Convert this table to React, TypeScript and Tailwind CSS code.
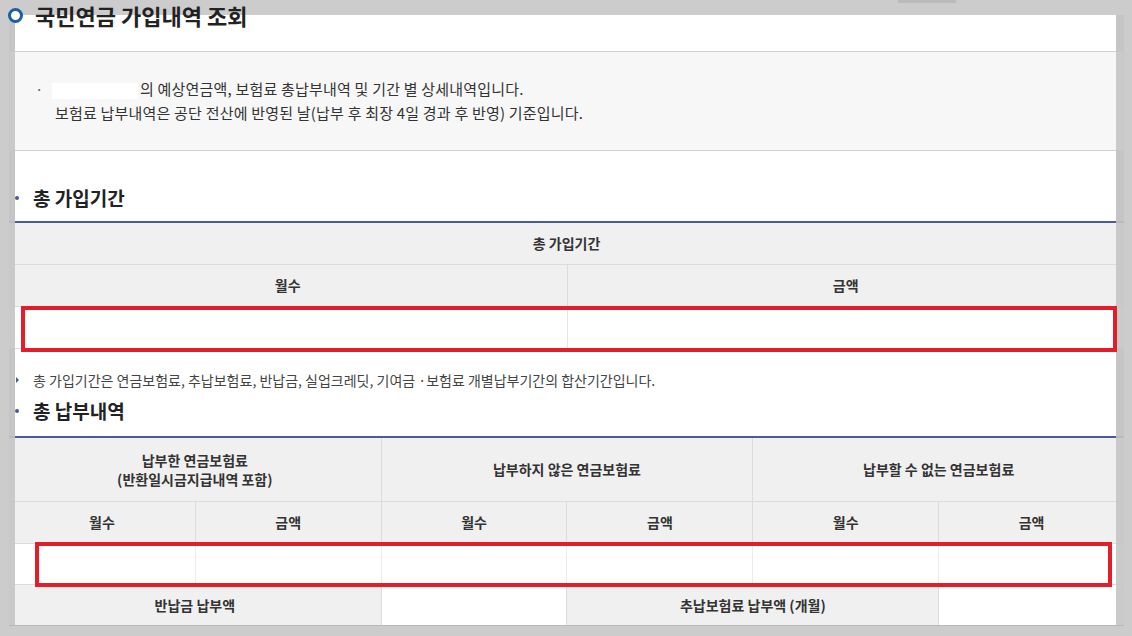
import React from "react";

const font = { fontFamily: '"Noto Sans CJK KR", "Noto Sans", sans-serif' };

function SectionTitle({ children }: { children: React.ReactNode }) {
    return (
        <div className="flex h-[28px] items-center pl-[6px]">
            <span className="h-[4px] w-[4px] rounded-full bg-[#4a5a9a]" />
            <h3 className="ml-[14px] text-[19px] font-bold leading-[28px] text-[#222]">{children}</h3>
        </div>
    );
}

function Th({ children, className = "" }: { children?: React.ReactNode; className?: string }) {
    return (
        <div className={`flex items-center justify-center bg-[#f0f0f0] text-center text-[14px] font-bold leading-[19px] text-[#333] ${className}`}>
            {children}
        </div>
    );
}

function Td({ className = "" }: { className?: string }) {
    return <div className={`bg-white ${className}`} />;
}

export default function App() {
    return (
        <div className="relative h-[636px] w-[1132px] overflow-hidden bg-[#cccccc]" style={font}>
            <div className="absolute left-[898px] top-0 h-[3px] w-[58px] bg-[#bbbbbb]" />

            <div className="ml-[15px] mt-[15px] flex h-[609px] w-[1101px] flex-col bg-white">
                <div className="-ml-[6px] flex w-[1115px] flex-col">
                    {/* page title */}
                    <div className="relative z-10 -mt-[15px] flex h-[30px] items-center">
                        <span className="-ml-[1px] h-[15px] w-[15px] rounded-full border-[3.5px] border-[#1d5fa6] bg-white" />
                        <h2 className="ml-[12px] text-[22px] font-bold leading-[30px] text-[#222]">국민연금 가입내역 조회</h2>
                    </div>

                    {/* info box */}
                    <div className="mt-[21px] h-[100px] border border-[#d0d0d0] bg-[#f7f7f7] pl-[25px] pt-[25px] text-[15px] leading-[24px] tracking-[0.2px] text-[#333]">
                        <div className="flex">
                            <span className="w-[20px] text-[#666]">·</span>
                            <p>
                                <span className="-ml-[3px] mr-[2px] inline-block h-[16px] w-[86px] bg-white align-middle" />
                                의 예상연금액, 보험료 총납부내역 및 기간 별 상세내역입니다.
                            </p>
                        </div>
                        <p className="pl-[20px]">보험료 납부내역은 공단 전산에 반영된 날(납부 후 최장 4일 경과 후 반영) 기준입니다.</p>
                    </div>

                    <div className="mt-[33px]">
                        <SectionTitle>총 가입기간</SectionTitle>
                    </div>

                    {/* total period table */}
                    <div className="relative mt-[9px] border-t-2 border-[#4a5a9a]">
                        <Th className="h-[42px] border-b border-[#dcdcdc]">총 가입기간</Th>
                        <div className="grid h-[42px] grid-cols-2 border-b border-[#dcdcdc]">
                            <Th>월수</Th>
                            <Th className="border-l border-[#dcdcdc]">금액</Th>
                        </div>
                        <div className="grid h-[42px] grid-cols-2 border-b border-[#dcdcdc]">
                            <Td />
                            <Td className="border-l border-[#e6e6e6]" />
                        </div>
                        <div className="absolute left-[12px] top-[83px] z-10 h-[46px] w-[1096px] border-[4px] border-[#e31e2a]" />
                    </div>

                    <div className="mt-[21px] flex h-[20px] items-center pl-[7px] text-[14px] leading-[20px] text-[#444]">
                        <span className="h-0 w-0 border-y-[3px] border-l-[3px] border-y-transparent border-l-[#4a5a9a]" />
                        <p className="ml-[14px]">총 가입기간은 연금보험료, 추납보험료, 반납금, 실업크레딧, 기여금 ·보험료 개별납부기간의 합산기간입니다.</p>
                    </div>

                    <div className="mt-[7px]">
                        <SectionTitle>총 납부내역</SectionTitle>
                    </div>

                    {/* total payment table */}
                    <div className="relative mt-[11px] border-t-2 border-[#4a5a9a]">
                        <div className="grid h-[64px] grid-cols-3 border-b border-[#dcdcdc]">
                            <Th>
                                납부한 연금보험료
                                <br />
                                (반환일시금지급내역 포함)
                            </Th>
                            <Th className="border-l border-[#dcdcdc]">납부하지 않은 연금보험료</Th>
                            <Th className="border-l border-[#dcdcdc]">납부할 수 없는 연금보험료</Th>
                        </div>
                        <div className="grid h-[42px] grid-cols-6 border-b border-[#dcdcdc]">
                            <Th>월수</Th>
                            <Th className="border-l border-[#dcdcdc]">금액</Th>
                            <Th className="border-l border-[#dcdcdc]">월수</Th>
                            <Th className="border-l border-[#dcdcdc]">금액</Th>
                            <Th className="border-l border-[#dcdcdc]">월수</Th>
                            <Th className="border-l border-[#dcdcdc]">금액</Th>
                        </div>
                        <div className="grid h-[41px] grid-cols-6 border-b border-[#dcdcdc]">
                            <Td />
                            <Td className="border-l border-[#ececec]" />
                            <Td className="border-l border-[#ececec]" />
                            <Td className="border-l border-[#ececec]" />
                            <Td className="border-l border-[#ececec]" />
                            <Td className="border-l border-[#ececec]" />
                        </div>
                        <div className="grid h-[41px] grid-cols-6 border-b border-[#b8b8b8]">
                            <Th className="col-span-2">반납금 납부액</Th>
                            <Td className="border-l border-[#dcdcdc]" />
                            <Th className="col-span-2 border-l border-[#dcdcdc]">추납보험료 납부액 (개월)</Th>
                            <Td className="border-l border-[#dcdcdc]" />
                        </div>
                        <div className="absolute left-[26px] top-[104px] z-10 h-[45px] w-[1077px] border-[4px] border-[#e31e2a]" />
                    </div>
                </div>
            </div>

            {/* grey mask over the parts that run past the white panel */}
            <div className="absolute left-[9px] top-[15px] z-[5] h-[610px] w-[6px] bg-[#c4c4c4]/90" />
            <div className="absolute left-[1116px] top-[15px] z-[5] h-[610px] w-[8px] bg-[#c4c4c4]/90" />
        </div>
    );
}
